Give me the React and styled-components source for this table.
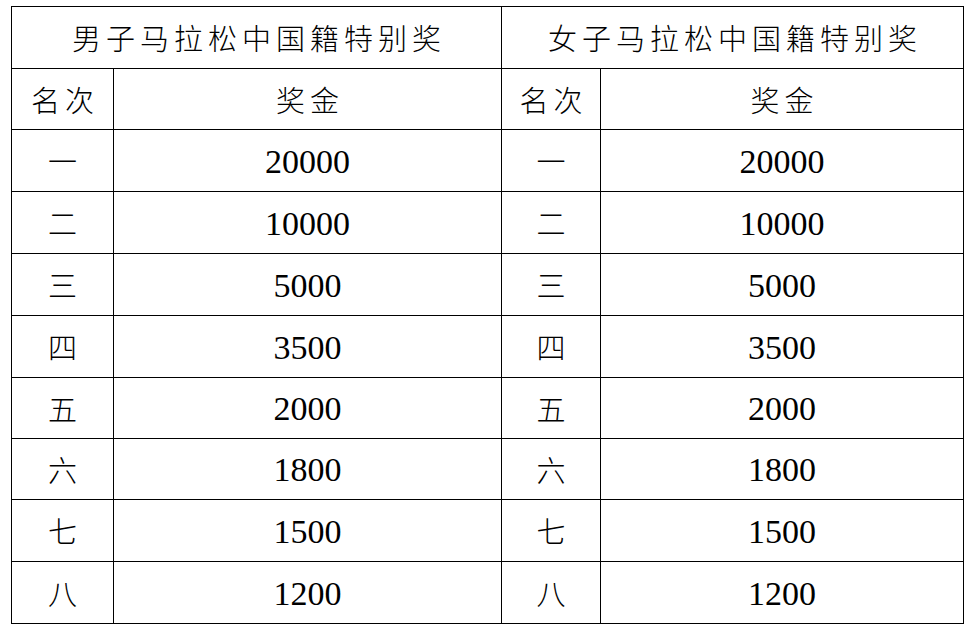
import React from "react";
import styled, { createGlobalStyle } from "styled-components";

const Global = createGlobalStyle`
  html, body { margin: 0; padding: 0; background: #fff; }
  body { font-family: "Noto Sans CJK SC", sans-serif; color: #000; }
`;

const Page = styled.div`
  padding: 6px 0 0 11px;
`;

const Grid = styled.div`
  display: grid;
  grid-template-columns: 102px 388px 99px 363px;
  grid-template-rows: 62px 61px 62px 62px 62px 62px 61px 61px 62px 62px;
  width: max-content;
  border-top: 1px solid #000;
  border-left: 1px solid #000;
`;

const Cell = styled.div`
  box-sizing: border-box;
  border-right: 1px solid #000;
  border-bottom: 1px solid #000;
  display: flex;
  align-items: center;
  justify-content: center;
  grid-column: ${(p) => (p.$span ? `span ${p.$span}` : "auto")};
  white-space: nowrap;
`;

const Han = styled.span`
  font-family: "Noto Sans CJK SC", sans-serif;
  font-weight: 200;
  font-size: 29px;
  letter-spacing: ${(p) => p.$ls || 5}px;
  padding-left: ${(p) => p.$ls || 5}px;
  line-height: 1;
`;

const Num = styled.span`
  font-family: "Liberation Serif", "Times New Roman", serif;
  font-size: 34px;
  line-height: 1;
  padding-top: 2px;
`;

const ranks = ["一", "二", "三", "四", "五", "六", "七", "八"];
const prizes = ["20000", "10000", "5000", "3500", "2000", "1800", "1500", "1200"];

export default function App() {
  return (
    <>
      <Global />
      <Page>
        <Grid>
          <Cell $span={2}><Han>男子马拉松中国籍特别奖</Han></Cell>
          <Cell $span={2}><Han>女子马拉松中国籍特别奖</Han></Cell>
          <Cell><Han>名次</Han></Cell>
          <Cell><Han>奖金</Han></Cell>
          <Cell><Han>名次</Han></Cell>
          <Cell><Han>奖金</Han></Cell>
          {ranks.map((r, i) => (
            <React.Fragment key={r}>
              <Cell><Han>{r}</Han></Cell>
              <Cell><Num>{prizes[i]}</Num></Cell>
              <Cell><Han>{r}</Han></Cell>
              <Cell><Num>{prizes[i]}</Num></Cell>
            </React.Fragment>
          ))}
        </Grid>
      </Page>
    </>
  );
}
